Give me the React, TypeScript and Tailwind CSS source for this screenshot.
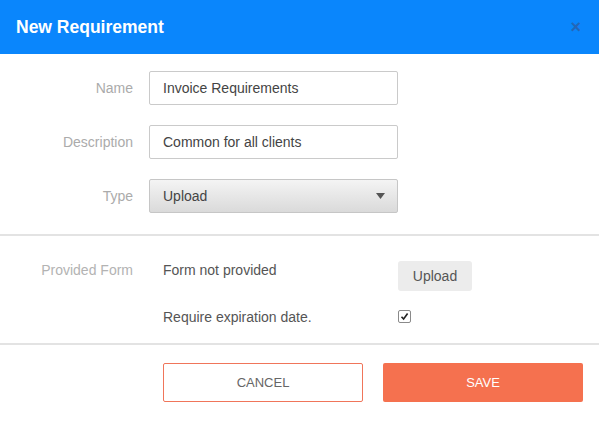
import React from "react";

function Field({ label, children }: { label: string; children: React.ReactNode }) {
  return (
    <div className="flex items-center">
      <div className="w-[133px] text-right text-[14px] text-[#ababab]">{label}</div>
      <div className="ml-[16px] w-[249px]">{children}</div>
    </div>
  );
}

export default function App() {
  return (
    <div className="w-[599px] h-[423px] bg-white font-['Liberation_Sans',Arial,sans-serif]">
      <div className="flex h-[54px] items-center justify-between bg-[#0a86fc] pl-[16px] pr-[18px]">
        <h1 className="text-[17.5px] font-bold text-white">New Requirement</h1>
        <span className="text-[18px] font-bold leading-none text-[#2466b8]">×</span>
      </div>

      <div className="flex flex-col gap-[20px] pt-[17px] pb-[21px]">
        <Field label="Name">
          <div className="flex h-[34px] items-center rounded-[2px] border border-[#cacaca] bg-white pl-[13px] text-[14px] text-[#444]">
            Invoice Requirements
          </div>
        </Field>
        <Field label="Description">
          <div className="flex h-[34px] items-center rounded-[2px] border border-[#cacaca] bg-white pl-[13px] text-[14px] text-[#444]">
            Common for all clients
          </div>
        </Field>
        <Field label="Type">
          <div className="flex h-[34px] items-center justify-between rounded-[2px] border border-[#c6c6c6] bg-gradient-to-b from-[#f4f4f4] to-[#dadada] pl-[13px] pr-[12px] text-[14px] text-[#444]">
            <span>Upload</span>
            <svg width="9" height="6" viewBox="0 0 9 6">
              <path d="M0 0 L9 0 L4.5 6 Z" fill="#555" />
            </svg>
          </div>
        </Field>
      </div>

      <div className="h-[2px] bg-[#e3e3e3]" />

      <div className="grid grid-cols-[133px_265px_1fr] gap-y-[18px] pt-[25px] pb-[18px] text-[14px] leading-[16px]">
        <div className="pt-[1px] text-right text-[#b3b3b3]">Provided Form</div>
        <div className="pt-[1px] pl-[30px] text-[#555]">Form not provided</div>
        <div>
          <button className="h-[30px] w-[74px] rounded-[3px] bg-[#ececec] text-[14px] text-[#555]">Upload</button>
        </div>
        <div />
        <div className="pl-[30px] text-[#555]">Require expiration date.</div>
        <div className="flex items-start pt-[1px]">
          <div className="flex h-[13px] w-[13px] items-center justify-center rounded-[2px] border border-[#8a8a8a] bg-white">
            <svg width="9" height="9" viewBox="0 0 9 9">
              <path d="M1.5 4.8 L3.6 7 L7.6 1.5" stroke="#222" strokeWidth="1.6" fill="none" />
            </svg>
          </div>
        </div>
      </div>

      <div className="h-[2px] bg-[#e3e3e3]" />

      <div className="flex gap-[20px] pl-[163px] pt-[18px]">
        <button className="h-[39px] w-[200px] rounded-[2px] border border-[#f0755a] bg-white text-[13px] text-[#666]">CANCEL</button>
        <button className="h-[39px] w-[200px] rounded-[2px] bg-[#f5714f] text-[13px] text-white">SAVE</button>
      </div>
    </div>
  );
}
